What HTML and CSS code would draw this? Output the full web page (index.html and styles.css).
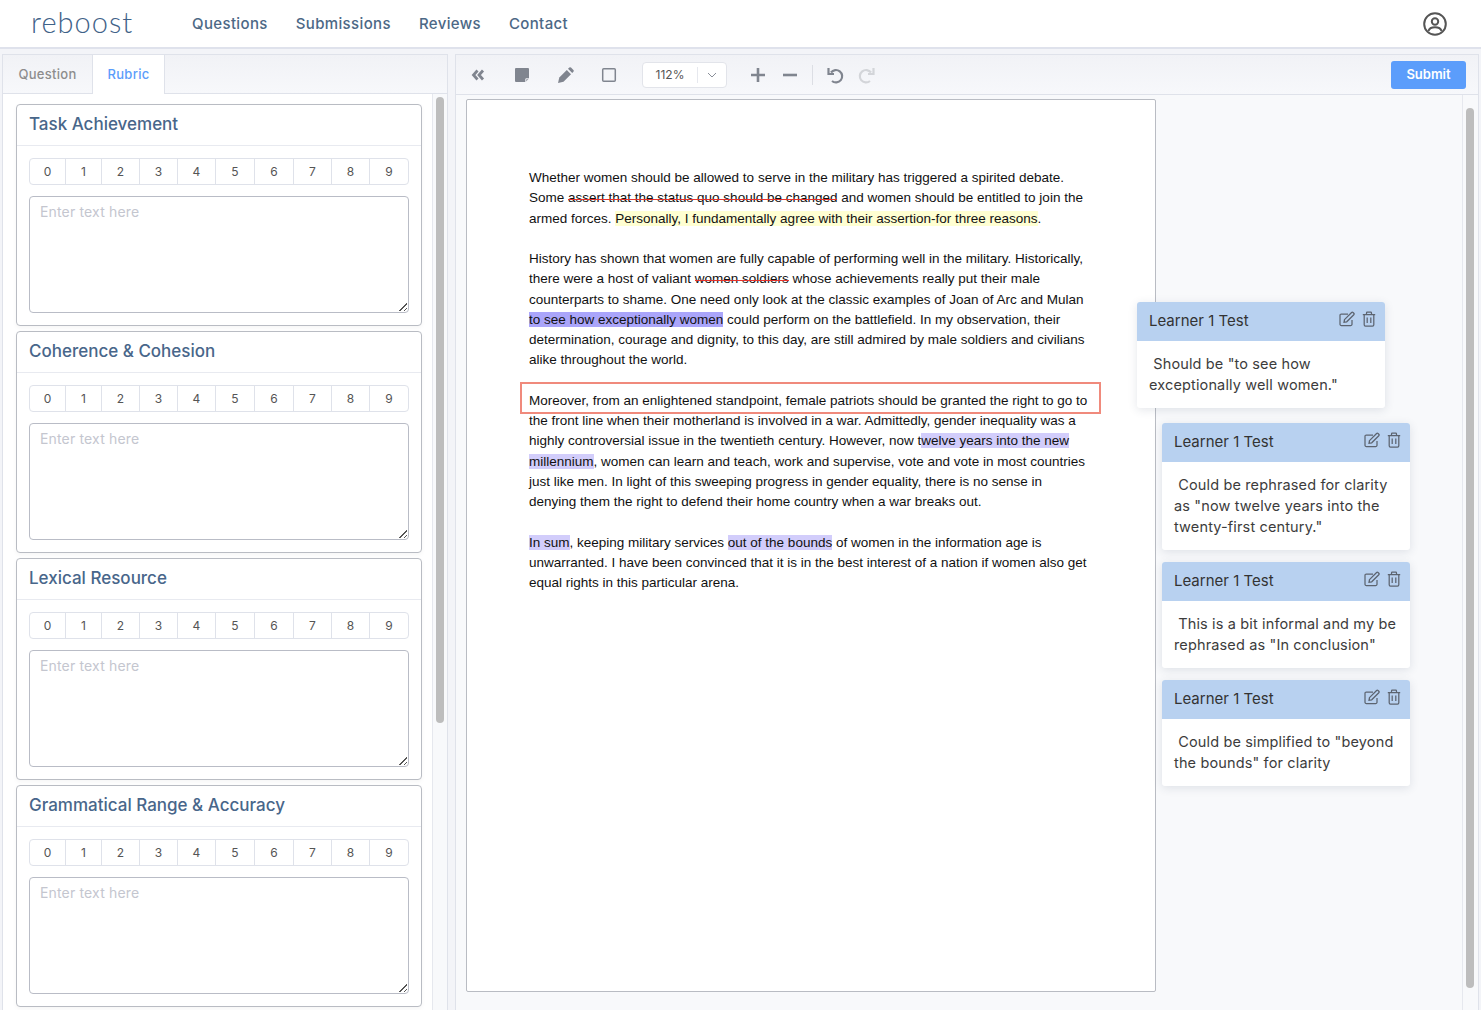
FILE: index.html
```html
<!DOCTYPE html>
<html lang="en">
<head>
<meta charset="utf-8">
<title>reboost</title>
<link rel="stylesheet" href="styles.css">
</head>
<body>
<svg class="defs" width="0" height="0">
  <symbol id="i-edit" viewBox="0 0 16 16"><path d="M13 9v4.200a1.300 1.300 0 0 1-1.300 1.300H2.300A1.300 1.300 0 0 1 1 13.200V4.300A1.300 1.300 0 0 1 2.300 3H9" fill="none" stroke="currentColor" stroke-width="1.250"/><path d="M5.500 8.600 12.600 1.500a1 1 0 0 1 1.400 0l.8.8a1 1 0 0 1 0 1.400L7.700 10.800l-2.700.5z" fill="none" stroke="currentColor" stroke-width="1.250"/></symbol>
  <symbol id="i-trash" viewBox="0 0 14 16"><path d="M.8 3.500h12.400M4.500 3.500V1.900a.8.8 0 0 1 .8-.8h3.400a.8.8 0 0 1 .8.8v1.600M2.200 3.500v10.200a1.300 1.300 0 0 0 1.300 1.300h7a1.300 1.300 0 0 0 1.300-1.300V3.500M5.200 6.500v5.500M8.800 6.500v5.500" fill="none" stroke="currentColor" stroke-width="1.250"/></symbol>
</svg>

<header class="navbar">
  <div class="logo">reboost</div>
  <nav class="nav-links">
    <a>Questions</a><a>Submissions</a><a>Reviews</a><a>Contact</a>
  </nav>
  <svg class="avatar" viewBox="0 0 24 24" width="24" height="24"><circle cx="12" cy="12" r="10.800" fill="none" stroke="currentColor" stroke-width="2"/><circle cx="12" cy="9.500" r="3.200" fill="none" stroke="currentColor" stroke-width="2"/><path d="M5.500 19c.8-3 3.500-3.700 6.500-3.700s5.700.7 6.500 3.700" fill="none" stroke="currentColor" stroke-width="2"/></svg>
</header>

<main class="workspace">
  <section class="left-panel">
    <div class="tabs">
      <div class="tab">Question</div>
      <div class="tab tab-active">Rubric</div>
    </div>
    <div class="rubric">
      <div class="rubric-list">
        <article class="rubric-card">
          <h2 class="rubric-title">Task Achievement</h2>
          <div class="rubric-body">
            <div class="scores"><span>0</span><span>1</span><span>2</span><span>3</span><span>4</span><span>5</span><span>6</span><span>7</span><span>8</span><span>9</span></div>
            <div class="fake-textarea">Enter text here<i class="grip"></i></div>
          </div>
        </article>
        <article class="rubric-card">
          <h2 class="rubric-title">Coherence &amp; Cohesion</h2>
          <div class="rubric-body">
            <div class="scores"><span>0</span><span>1</span><span>2</span><span>3</span><span>4</span><span>5</span><span>6</span><span>7</span><span>8</span><span>9</span></div>
            <div class="fake-textarea">Enter text here<i class="grip"></i></div>
          </div>
        </article>
        <article class="rubric-card">
          <h2 class="rubric-title">Lexical Resource</h2>
          <div class="rubric-body">
            <div class="scores"><span>0</span><span>1</span><span>2</span><span>3</span><span>4</span><span>5</span><span>6</span><span>7</span><span>8</span><span>9</span></div>
            <div class="fake-textarea">Enter text here<i class="grip"></i></div>
          </div>
        </article>
        <article class="rubric-card">
          <h2 class="rubric-title">Grammatical Range &amp; Accuracy</h2>
          <div class="rubric-body">
            <div class="scores"><span>0</span><span>1</span><span>2</span><span>3</span><span>4</span><span>5</span><span>6</span><span>7</span><span>8</span><span>9</span></div>
            <div class="fake-textarea">Enter text here<i class="grip"></i></div>
          </div>
        </article>
      </div>
      <div class="scroll-track scroll-left"><div class="thumb thumb-left"></div></div>
    </div>
  </section>

  <section class="right-panel">
    <div class="toolbar">
      <button class="tool"><svg viewBox="0 0 16 16" width="16" height="16"><path d="M7.500 3.500 3.500 8l4 4.500M13 3.500 9 8l4 4.500" fill="none" stroke="currentColor" stroke-width="2.800"/></svg></button>
      <button class="tool"><svg viewBox="0 0 16 16" width="16" height="16"><path d="M2 1h12a1 1 0 0 1 1 1v9.500L11.500 15H2a1 1 0 0 1-1-1V2a1 1 0 0 1 1-1z" fill="currentColor"/><path d="M11.800 15v-3.200H15" fill="none" stroke="#f5f6f9" stroke-width="1"/></svg></button>
      <button class="tool"><svg viewBox="0 0 16 16" width="16" height="16"><path d="M0 16l1.300-5.500L8.800 3l4.200 4.200L5.500 14.700z" fill="currentColor"/><path d="M10 1.800 11.300.6a1.200 1.200 0 0 1 1.700 0l2.400 2.400a1.200 1.200 0 0 1 0 1.700L14.200 6z" fill="currentColor"/></svg></button>
      <button class="tool tool-square"><svg viewBox="0 0 16 16" width="16" height="16"><rect x="1.700" y="1.700" width="12.600" height="12.600" rx="1" fill="none" stroke="currentColor" stroke-width="1.500"/></svg></button>
      <div class="zoom-select">
        <span class="zoom-value">112%</span>
        <span class="zoom-caret"><svg viewBox="0 0 10 6" width="10" height="6"><path d="M1 1l4 4 4-4" fill="none" stroke="#8a8f99" stroke-width="1"/></svg></span>
      </div>
      <button class="tool tool-plus"><svg viewBox="0 0 16 16" width="16" height="16"><path d="M8 1v14M1 8h14" fill="none" stroke="currentColor" stroke-width="2.600"/></svg></button>
      <button class="tool tool-minus"><svg viewBox="0 0 16 16" width="16" height="16"><path d="M1 8h14" fill="none" stroke="currentColor" stroke-width="2.600"/></svg></button>
      <span class="divider"></span>
      <button class="tool tool-undo"><svg viewBox="0 0 18 18" width="18" height="18"><path d="M5 6.500A6.200 6.200 0 1 1 6 15" fill="none" stroke="currentColor" stroke-width="2.200"/><path d="M2.500 2v6H8" fill="none" stroke="currentColor" stroke-width="2.200"/></svg></button>
      <button class="tool tool-redo"><svg viewBox="0 0 18 18" width="18" height="18"><path d="M13 6.500A6.200 6.200 0 1 0 12 15" fill="none" stroke="currentColor" stroke-width="2.200"/><path d="M15.500 2v6H10" fill="none" stroke="currentColor" stroke-width="2.200"/></svg></button>
      <button class="submit">Submit</button>
    </div>
    <div class="canvas">
      <div class="page">
        <p>Whether women should be allowed to serve in the military has triggered a spirited debate.<br>
        Some <span class="strike">assert that the status quo should be changed</span> and women should be entitled to join the<br>
        armed forces. <span class="hl-yellow">Personally, I fundamentally agree with their assertion-for three reasons</span>.</p>
        <p>History has shown that women are fully capable of performing well in the military. Historically,<br>
        there were a host of valiant <span class="strike">women soldiers</span> whose achievements really put their male<br>
        counterparts to shame. One need only look at the classic examples of Joan of Arc and Mulan<br>
        <span class="hl-strong">to see how exceptionally women</span> could perform on the battlefield. In my observation, their<br>
        determination, courage and dignity, to this day, are still admired by male soldiers and civilians<br>
        alike throughout the world.</p>
        <p>Moreover, from an enlightened standpoint, female patriots should be granted the right to go to<br>
        the front line when their motherland is involved in a war. Admittedly, gender inequality was a<br>
        highly controversial issue in the twentieth century. However, now t<span class="hl-light">welve years into the new</span><br>
        <span class="hl-light">millennium</span>, women can learn and teach, work and supervise, vote and vote in most countries<br>
        just like men. In light of this sweeping progress in gender equality, there is no sense in<br>
        denying them the right to defend their home country when a war breaks out.</p>
        <p><span class="hl-light">In sum</span>, keeping military services <span class="hl-light">out of the bounds</span> of women in the information age is<br>
        unwarranted. I have been convinced that it is in the best interest of a nation if women also get<br>
        equal rights in this particular arena.</p>
        <div class="red-box"></div>
      </div>

      <aside class="comment c1">
        <div class="comment-head"><span>Learner 1 Test</span><span class="comment-icons"><svg width="16" height="16"><use href="#i-edit"/></svg><svg width="14" height="16"><use href="#i-trash"/></svg></span></div>
        <div class="comment-body">&nbsp;Should be "to see how<br>exceptionally well women."</div>
      </aside>
      <aside class="comment c2">
        <div class="comment-head"><span>Learner 1 Test</span><span class="comment-icons"><svg width="16" height="16"><use href="#i-edit"/></svg><svg width="14" height="16"><use href="#i-trash"/></svg></span></div>
        <div class="comment-body">&nbsp;Could be rephrased for clarity<br>as "now twelve years into the<br>twenty-first century."</div>
      </aside>
      <aside class="comment c3">
        <div class="comment-head"><span>Learner 1 Test</span><span class="comment-icons"><svg width="16" height="16"><use href="#i-edit"/></svg><svg width="14" height="16"><use href="#i-trash"/></svg></span></div>
        <div class="comment-body">&nbsp;This is a bit informal and my be<br>rephrased as "In conclusion"</div>
      </aside>
      <aside class="comment c4">
        <div class="comment-head"><span>Learner 1 Test</span><span class="comment-icons"><svg width="16" height="16"><use href="#i-edit"/></svg><svg width="14" height="16"><use href="#i-trash"/></svg></span></div>
        <div class="comment-body">&nbsp;Could be simplified to "beyond<br>the bounds" for clarity</div>
      </aside>

      <div class="scroll-track scroll-right"><div class="thumb thumb-right"></div></div>
    </div>
  </section>
</main>
</body>
</html>
```

FILE: styles.css
```css
* { box-sizing: border-box; }
html, body { margin: 0; height: 1010px; overflow: hidden; }
body {
  font-family: "Inter", "Noto Sans", sans-serif;
  background: #f3f4f8;
  color: #333;
}
.defs { position: absolute; }

/* top navigation */
.navbar {
  height: 49px;
  background: #fff;
  border-bottom: 2px solid #dfe2ec;
  display: flex;
  align-items: center;
  padding: 0 34px 0 31px;
}
.logo {
  font-family: "Lato", sans-serif;
  font-weight: 300;
  font-size: 29px;
  letter-spacing: 1px;
  color: #3f6288;
  width: 161px;
  margin-top: -4px;
}
.nav-links { display: flex; gap: 28px; flex: 1; }
.nav-links a {
  font-size: 15px;
  font-weight: 500;
  letter-spacing: .36px;
  color: #4c6886;
}
.avatar { color: #555; }

/* main split */
.workspace {
  display: grid;
  grid-template-columns: 446px 1024px;
  column-gap: 7px;
  padding: 5px 0 0 2px;
  height: 961px;
}

/* left panel */
.left-panel {
  background: #fff;
  border: 1px solid #dfe2ea;
  border-bottom: 0;
  display: flex;
  flex-direction: column;
  min-height: 0;
}
.tabs {
  height: 39px;
  flex: none;
  display: flex;
  background: linear-gradient(#f1f2f6, #f7f8fb);
  border-bottom: 1px solid #dfe2ea;
}
.tab {
  width: 90px;
  font-size: 13px;
  font-weight: 500;
  letter-spacing: .3px;
  color: #8d8d8d;
  display: flex;
  align-items: center;
  justify-content: center;
  padding-bottom: 1px;
  border-right: 1px solid #dfe2ea;
}
.tab-active {
  width: 72px;
  background: #fff;
  color: #5b9dfb;
  height: 39px;
}
.rubric {
  flex: 1;
  min-height: 0;
  position: relative;
  overflow: hidden;
  padding: 10px 0 0 13px;
}
.rubric-list { width: 406px; display: flex; flex-direction: column; gap: 5px; }
.rubric-card {
  height: 222px;
  flex: none;
  border: 1px solid #b9bcc3;
  border-radius: 4px;
  background: #fff;
  box-shadow: 0 2px 4px rgba(0, 0, 0, .04);
}
.rubric-title {
  margin: 0;
  height: 41px;
  padding: 0 12px;
  font-size: 17px;
  line-height: 39px;
  font-weight: 500;
  color: #48668a;
  border-bottom: 1px solid #e8eaf0;
}
.rubric-body { padding: 12px 12px 0; }
.scores {
  display: grid;
  grid-template-columns: 36fr 36fr 38fr 38fr 38fr 39fr 39fr 38fr 38fr 38fr;
  height: 27px;
  border: 1px solid #dfe2ea;
  border-radius: 4px;
  background: #fff;
  margin-bottom: 11px;
}
.scores span {
  display: flex;
  align-items: center;
  justify-content: center;
  font-size: 12px;
  color: #555;
  border-right: 1px solid #dfe2ea;
}
.scores span:last-child { border-right: 0; }
.fake-textarea {
  position: relative;
  height: 117px;
  border: 1px solid #b9bcc6;
  border-radius: 4px;
  padding: 5px 10px;
  font-size: 14px;
  letter-spacing: .16px;
  line-height: 19px;
  color: #c4c6cf;
}
.grip {
  position: absolute;
  right: 1px;
  bottom: 1px;
  width: 8px;
  height: 8px;
  background: linear-gradient(135deg, transparent 50%, #555 50%, #555 58%, transparent 58%, transparent 76%, #555 76%, #555 84%, transparent 84%);
}
.scroll-track { position: absolute; top: 0; bottom: 0; background: #f8f9fb; border-left: 1px solid #e6e8ee; }
.scroll-left { right: 0; width: 15px; }
.scroll-right { right: 0; width: 16px; }
.thumb { position: absolute; width: 8px; background: #bdbdbd; border-radius: 4px; }
.thumb-left { left: 3px; top: 3px; height: 626px; }
.thumb-right { left: 3px; top: 13px; height: 880px; }

/* right panel */
.right-panel {
  border: 1px solid #dfe2ea;
  border-bottom: 0;
  display: flex;
  flex-direction: column;
  min-height: 0;
  background: #f8f9fb;
}
.toolbar {
  height: 40px;
  flex: none;
  display: flex;
  align-items: center;
  padding: 0 12px 0 0;
  background: linear-gradient(#f1f2f6, #f7f8fb);
  border-bottom: 1px solid #dfe2ea;
}
.tool {
  width: 44px;
  height: 28px;
  padding: 0;
  border: 0;
  background: transparent;
  color: #80858f;
  display: flex;
  align-items: center;
  justify-content: center;
}
.tool-square { margin-left: -1px; }
.zoom-select {
  margin-left: 11px;
  width: 85px;
  height: 26px;
  background: #fff;
  border: 1px solid #e2e4ea;
  border-radius: 4px;
  display: flex;
  align-items: center;
}
.zoom-value {
  width: 55px;
  text-align: center;
  font-size: 12px;
  color: #555;
  border-right: 1px solid #e6e8ee;
  line-height: 16px;
}
.zoom-caret { flex: 1; display: flex; justify-content: center; }
.tool-plus { width: 32px; margin-left: 15px; }
.tool-minus { width: 32px; }
.divider { width: 1px; height: 20px; background: #dcdee4; margin: 0 6px 0 6px; }
.tool-undo { width: 32px; margin-left: 0; }
.tool-redo { width: 32px; color: #d3d5d9; }
.submit {
  margin-left: auto;
  width: 75px;
  height: 28px;
  border: 0;
  border-radius: 3px;
  background: #5b9dfb;
  color: #fff;
  padding: 0 0 2px;
  font: 600 13px "Inter", sans-serif;
}
.canvas {
  flex: 1;
  min-height: 0;
  position: relative;
  overflow: hidden;
  padding: 4px 0 0 10px;
}
.page {
  position: relative;
  width: 690px;
  height: 893px;
  background: #fff;
  border: 1px solid #b9bcc3;
  border-radius: 2px;
  padding: 68px 0 0 62px;
  font-family: "Liberation Sans", Arial, sans-serif;
  font-size: 13.500px;
  line-height: 20.250px;
  color: #111;
  white-space: nowrap;
}
.page p { margin: 0 0 20.250px; }
.strike { position: relative; }
.strike::after {
  content: "";
  position: absolute;
  left: 0;
  right: 0;
  top: 9px;
  height: 1px;
  background: #e5322d;
}
.hl-yellow { background: #ffffd2; }
.hl-strong { background: #aaa5fa; }
.hl-light { background: #d2cdfb; }
.red-box {
  position: absolute;
  left: 53px;
  top: 282px;
  width: 581px;
  height: 32px;
  border: 2px solid #f08a7c;
}

/* comments */
.comment {
  position: absolute;
  width: 248px;
  background: #fff;
  border-radius: 3px;
  box-shadow: 0 2px 10px rgba(50, 60, 90, .13);
  font-size: 14.500px;
  letter-spacing: .14px;
  color: #3c3c3c;
  overflow: hidden;
}
.comment-head {
  height: 39px;
  background: #b8d1f0;
  display: flex;
  align-items: center;
  justify-content: space-between;
  padding: 0 9px 3px 12px;
  font-size: 15px;
  letter-spacing: 0;
  color: #333;
}
.comment-icons { display: flex; gap: 7px; color: #5c6470; margin-top: -3px; }
.comment-body { padding: 12px 12px 13px; line-height: 21px; white-space: nowrap; }
.c1 { left: 681px; top: 207px; }
.c2 { left: 706px; top: 328px; }
.c3 { left: 706px; top: 467px; }
.c4 { left: 706px; top: 585px; }
```
